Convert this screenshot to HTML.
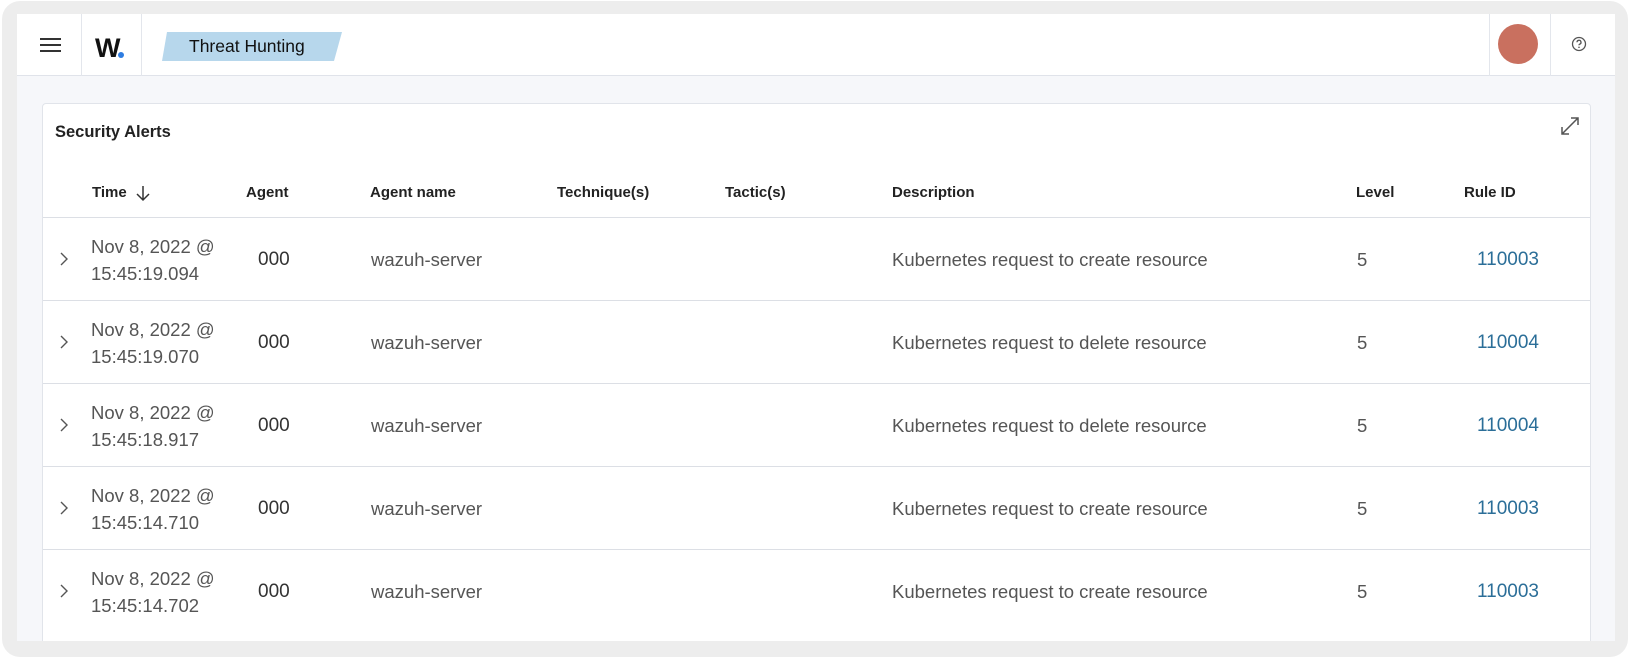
<!DOCTYPE html>
<html><head><meta charset="utf-8"><style>
*{margin:0;padding:0;box-sizing:border-box}
body{width:1630px;height:660px;background:#fff;font-family:"Liberation Sans",sans-serif;position:relative;overflow:hidden}
.outer{position:absolute;left:2px;top:1px;width:1626px;height:656px;background:#ededed;border-radius:18px}
.inner{position:absolute;left:17px;top:14px;width:1598px;height:627px;background:#f6f7fa;overflow:hidden}
.hdr{position:absolute;left:0;top:0;width:100%;height:62px;background:#fff;border-bottom:1px solid #e0e3ea}
.vd{position:absolute;top:0;width:1px;height:62px;background:#e3e6ec}
.panel{position:absolute;left:25px;top:89px;width:1549px;height:560px;background:#fff;border:1px solid #e1e4ea;border-radius:4px}
.t{position:absolute;white-space:nowrap}
.th{font-weight:bold;font-size:15px;color:#222}
.row{position:absolute;left:0;width:100%;height:83px;border-top:1px solid #dcdfe5}
.cell{position:absolute;font-size:18.5px;color:#555;white-space:nowrap}
</style></head><body>
<div class="outer"></div>
<div class="inner">
 <div class="hdr">
  <div style="position:absolute;left:23px;top:24px;width:21px;height:2px;background:#333;box-shadow:0 6px 0 #333,0 12px 0 #333"></div>
  <div class="vd" style="left:64px"></div>
  <div class="t" style="left:78px;top:19px;font-size:27px;font-weight:bold;color:#111;letter-spacing:-1px">W</div>
  <div style="position:absolute;left:101px;top:38px;width:6px;height:6px;border-radius:50%;background:#2f7de1"></div>
  <div class="vd" style="left:124px"></div>
  <svg style="position:absolute;left:145px;top:18px" width="180" height="30"><polygon points="5,0 180,0 172,29 0,29" fill="#b7d7ec"/></svg>
  <div class="t" style="left:172px;top:22px;font-size:17.5px;color:#111">Threat Hunting</div>
  <div class="vd" style="left:1472px"></div>
  <div style="position:absolute;left:1481px;top:10px;width:40px;height:40px;border-radius:50%;background:#c9705f"></div>
  <div class="vd" style="left:1533px"></div>
  <svg style="position:absolute;left:1554px;top:22px" width="16" height="16" viewBox="0 0 16 16"><circle cx="8" cy="8" r="6.5" fill="none" stroke="#555" stroke-width="1.3"/><path d="M6 6.3a2 2 0 1 1 2.6 1.9c-.5.2-.6.5-.6 1.1" fill="none" stroke="#555" stroke-width="1.3"/><circle cx="8" cy="11.3" r=".8" fill="#555"/></svg>
 </div>
 <div class="panel">
  <div class="t" style="left:12px;top:19px;font-size:16.5px;font-weight:bold;color:#222">Security Alerts</div>
  <svg style="position:absolute;left:1515px;top:10px" width="24" height="24" viewBox="0 0 24 24" fill="none" stroke="#555" stroke-width="1.5"><path d="M4 20L20 4M13 4h7v7M4 13v7h7"/></svg>
  <div class="t th" style="left:49px;top:80px">Time</div>
  <svg style="position:absolute;left:92px;top:80px" width="16" height="18" fill="none" stroke="#333" stroke-width="1.5"><path d="M8 2v14M2 10l6 6 6-6"/></svg>
  <div class="t th" style="left:203px;top:80px">Agent</div>
  <div class="t th" style="left:327px;top:80px">Agent name</div>
  <div class="t th" style="left:514px;top:80px">Technique(s)</div>
  <div class="t th" style="left:682px;top:80px">Tactic(s)</div>
  <div class="t th" style="left:849px;top:80px">Description</div>
  <div class="t th" style="left:1313px;top:80px">Level</div>
  <div class="t th" style="left:1421px;top:80px">Rule ID</div>
  <div class="row" style="top:113px">
   <svg style="position:absolute;left:16px;top:34px" width="10" height="14" fill="none" stroke="#555" stroke-width="1.4"><path d="M2 1l6 6-6 6"/></svg>
   <div class="cell" style="left:48px;top:15px;line-height:27px">Nov 8, 2022 @<br>15:45:19.094</div>
   <div class="cell" style="left:215px;top:31px;font-size:19px;color:#333">000</div>
   <div class="cell" style="left:328px;top:31px">wazuh-server</div>
   <div class="cell" style="left:849px;top:31px">Kubernetes request to create resource</div>
   <div class="cell" style="left:1314px;top:31px">5</div>
   <div class="cell" style="left:1434px;top:31px;font-size:19px;color:#2b6e98">110003</div>
  </div>
  <div class="row" style="top:196px">
   <svg style="position:absolute;left:16px;top:34px" width="10" height="14" fill="none" stroke="#555" stroke-width="1.4"><path d="M2 1l6 6-6 6"/></svg>
   <div class="cell" style="left:48px;top:15px;line-height:27px">Nov 8, 2022 @<br>15:45:19.070</div>
   <div class="cell" style="left:215px;top:31px;font-size:19px;color:#333">000</div>
   <div class="cell" style="left:328px;top:31px">wazuh-server</div>
   <div class="cell" style="left:849px;top:31px">Kubernetes request to delete resource</div>
   <div class="cell" style="left:1314px;top:31px">5</div>
   <div class="cell" style="left:1434px;top:31px;font-size:19px;color:#2b6e98">110004</div>
  </div>
  <div class="row" style="top:279px">
   <svg style="position:absolute;left:16px;top:34px" width="10" height="14" fill="none" stroke="#555" stroke-width="1.4"><path d="M2 1l6 6-6 6"/></svg>
   <div class="cell" style="left:48px;top:15px;line-height:27px">Nov 8, 2022 @<br>15:45:18.917</div>
   <div class="cell" style="left:215px;top:31px;font-size:19px;color:#333">000</div>
   <div class="cell" style="left:328px;top:31px">wazuh-server</div>
   <div class="cell" style="left:849px;top:31px">Kubernetes request to delete resource</div>
   <div class="cell" style="left:1314px;top:31px">5</div>
   <div class="cell" style="left:1434px;top:31px;font-size:19px;color:#2b6e98">110004</div>
  </div>
  <div class="row" style="top:362px">
   <svg style="position:absolute;left:16px;top:34px" width="10" height="14" fill="none" stroke="#555" stroke-width="1.4"><path d="M2 1l6 6-6 6"/></svg>
   <div class="cell" style="left:48px;top:15px;line-height:27px">Nov 8, 2022 @<br>15:45:14.710</div>
   <div class="cell" style="left:215px;top:31px;font-size:19px;color:#333">000</div>
   <div class="cell" style="left:328px;top:31px">wazuh-server</div>
   <div class="cell" style="left:849px;top:31px">Kubernetes request to create resource</div>
   <div class="cell" style="left:1314px;top:31px">5</div>
   <div class="cell" style="left:1434px;top:31px;font-size:19px;color:#2b6e98">110003</div>
  </div>
  <div class="row" style="top:445px">
   <svg style="position:absolute;left:16px;top:34px" width="10" height="14" fill="none" stroke="#555" stroke-width="1.4"><path d="M2 1l6 6-6 6"/></svg>
   <div class="cell" style="left:48px;top:15px;line-height:27px">Nov 8, 2022 @<br>15:45:14.702</div>
   <div class="cell" style="left:215px;top:31px;font-size:19px;color:#333">000</div>
   <div class="cell" style="left:328px;top:31px">wazuh-server</div>
   <div class="cell" style="left:849px;top:31px">Kubernetes request to create resource</div>
   <div class="cell" style="left:1314px;top:31px">5</div>
   <div class="cell" style="left:1434px;top:31px;font-size:19px;color:#2b6e98">110003</div>
  </div>
 </div>
</div>
</body></html>
